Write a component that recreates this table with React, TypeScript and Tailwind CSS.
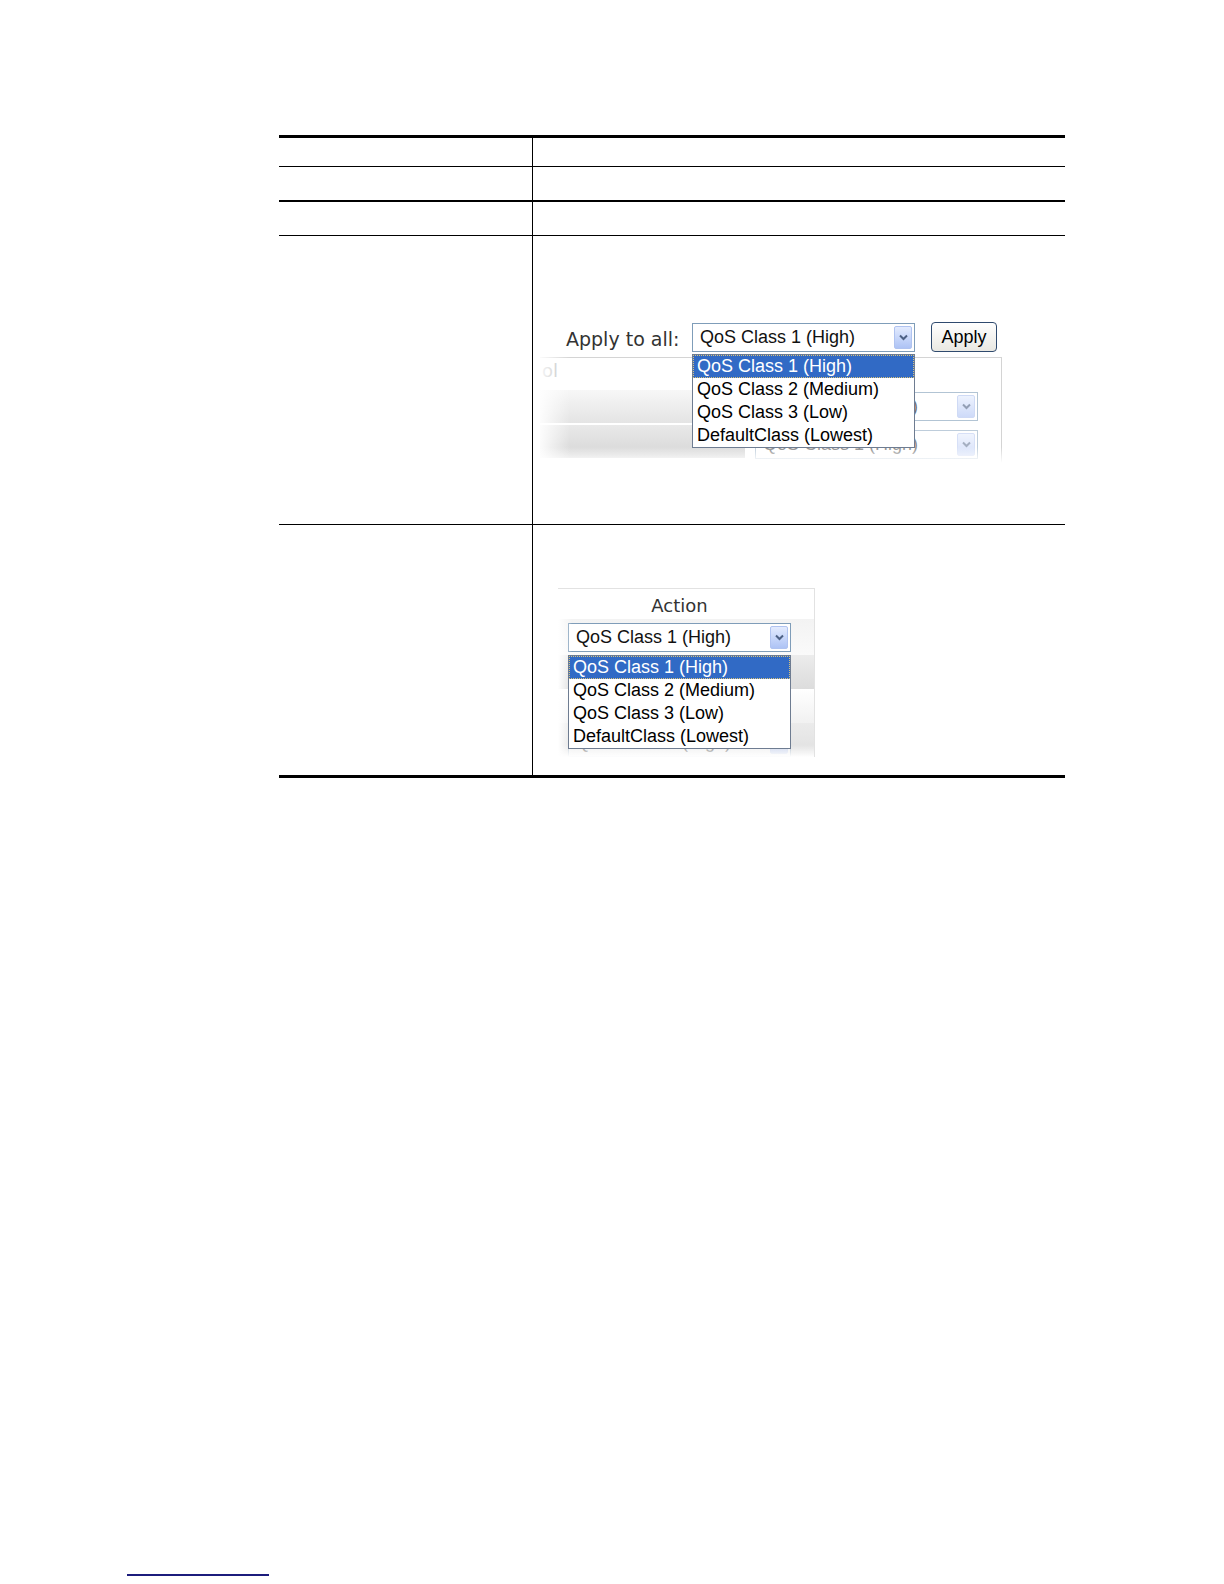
const options = ['QoS Class 1 (High)', 'QoS Class 2 (Medium)', 'QoS Class 3 (Low)', 'DefaultClass (Lowest)'];

function ArrowButton() {
  return (
    <span className="flex h-[23px] w-[18px] items-center justify-center rounded-[2px] border border-[#b0c3f0] bg-linear-to-b from-[#e3ebfe] to-[#aec3f5]">
      <svg width="9" height="7" viewBox="0 0 9 7">
        <path d="M1 1.5 L4.5 5 L8 1.5" fill="none" stroke="#4d6185" strokeWidth="2" />
      </svg>
    </span>
  );
}

function Select({ className = '' }: { className?: string }) {
  return (
    <div
      className={`flex h-[29px] w-[223px] shrink-0 items-center justify-between border border-[#7f9db9] bg-white pl-[7px] pr-[2px] font-['Liberation_Sans',Arial,sans-serif] text-[18px] text-[#111] ${className}`}
    >
      <span>QoS Class 1 (High)</span>
      <ArrowButton />
    </div>
  );
}

function Dropdown({ className = '' }: { className?: string }) {
  return (
    <ul
      className={`absolute z-10 w-[223px] border border-[#6e7c91] bg-white font-['Liberation_Sans',Arial,sans-serif] text-[18px] leading-[23px] text-black ${className}`}
    >
      {options.map((o, i) => (
        <li
          key={o}
          className={
            i === 0
              ? 'h-[23px] border border-dotted border-[#d9c27a] bg-[#316ac5] pl-[3px] leading-[21px] text-white'
              : 'h-[23px] pl-[4px]'
          }
        >
          {o}
        </li>
      ))}
    </ul>
  );
}

// screenshot: "Apply to all" with open list
function ApplyAllShot() {
  return (
    <div className="relative ml-[7px] mt-[84px] h-[143px] w-[462px]">
      <div className="flex h-[34px] items-center">
        <span className="ml-[26px] w-[126px] pt-[4px] font-['DejaVu_Sans',Verdana,sans-serif] text-[19px] text-[#333]">
          Apply to all:
        </span>
        <Select />
        <button className="ml-[16px] h-[30px] w-[66px] rounded-[4px] border border-[#2f4a6e] bg-linear-to-b from-white to-[#e9e8e2] font-['Liberation_Sans',Arial,sans-serif] text-[18px] text-black">
          Apply
        </button>
      </div>
      <div className="mt-[3px] h-[106px] overflow-hidden border-t border-r border-[#d4d4d4]">
        <div className="mt-[3px] h-[20px] pl-[2px] font-['DejaVu_Sans',Verdana,sans-serif] text-[18px] leading-[20px] text-[#b8b8b8]">
          ol
        </div>
        <div className="mt-[9px] flex h-[33px] items-center">
          <div className="h-full w-[205px] bg-linear-to-b from-[#f7f7f7] to-[#e4e4e4]" />
          <Select className="ml-[10px] opacity-60" />
        </div>
        <div className="mt-[2px] flex h-[33px] items-center">
          <div className="h-full w-[205px] bg-linear-to-b from-[#e9e9e9] to-[#d6d6d6]" />
          <Select className="ml-[10px] mt-[6px] opacity-50" />
        </div>
      </div>
      <div className="absolute bottom-0 left-0 top-[37px] w-[30px] bg-linear-to-r from-white/90 to-transparent" />
      <div className="absolute bottom-0 left-0 right-0 h-[16px] bg-linear-to-t from-white to-transparent" />
      <Dropdown className="left-[152px] top-[34px]" />
    </div>
  );
}

// screenshot: "Action" column with open list
function ActionShot() {
  return (
    <div className="relative ml-[25px] mt-[63px] h-[169px] w-[257px] overflow-hidden border-t border-r border-[#e2e2e2]">
      <div className="ml-[10px] h-[30px] w-[223px] pt-[3px] text-center font-['DejaVu_Sans',Verdana,sans-serif] text-[18px] leading-[27px] text-[#333]">
        Action
      </div>
      <div className="flex h-[36px] items-center bg-linear-to-b from-[#f3f3f3] to-[#fafafa] pl-[10px]">
        <Select />
      </div>
      <div className="h-[34px] bg-linear-to-b from-[#ececec] to-[#dcdcdc]" />
      <div className="h-[34px] bg-linear-to-b from-white to-[#f1f1f1]" />
      <div className="h-[34px] bg-linear-to-b from-[#ebebeb] to-[#e0e0e0] pl-[10px] pt-[5px]">
        <Select className="opacity-50" />
      </div>
      <div className="absolute bottom-0 left-0 top-0 w-[14px] bg-linear-to-r from-white to-transparent" />
      <div className="absolute bottom-0 left-0 right-0 h-[12px] bg-linear-to-t from-white to-transparent" />
      <Dropdown className="left-[10px] top-[66px]" />
    </div>
  );
}

export default function App() {
  return (
    <div className="flex h-[1584px] w-[1224px] flex-col bg-white">
      <div className="ml-[279px] mt-[135px] w-[786px] border-y-[3px] border-black">
        <div className="flex h-[29px] border-b border-black">
          <div className="w-[254px] shrink-0 border-r border-black" />
          <div className="flex-1" />
        </div>
        <div className="flex h-[35px] border-b-2 border-black">
          <div className="w-[254px] shrink-0 border-r border-black" />
          <div className="flex-1" />
        </div>
        <div className="flex h-[34px] border-b border-black">
          <div className="w-[254px] shrink-0 border-r border-black" />
          <div className="flex-1" />
        </div>
        <div className="flex h-[289px] border-b border-black">
          <div className="w-[254px] shrink-0 border-r border-black" />
          <div className="flex-1">
            <ApplyAllShot />
          </div>
        </div>
        <div className="flex h-[250px]">
          <div className="w-[254px] shrink-0 border-r border-black" />
          <div className="flex-1">
            <ActionShot />
          </div>
        </div>
      </div>
      <div className="mt-auto pb-[8px] pl-[127px]">
        <div className="h-[2px] w-[142px] bg-[#1c1c7c]" />
      </div>
    </div>
  );
}
